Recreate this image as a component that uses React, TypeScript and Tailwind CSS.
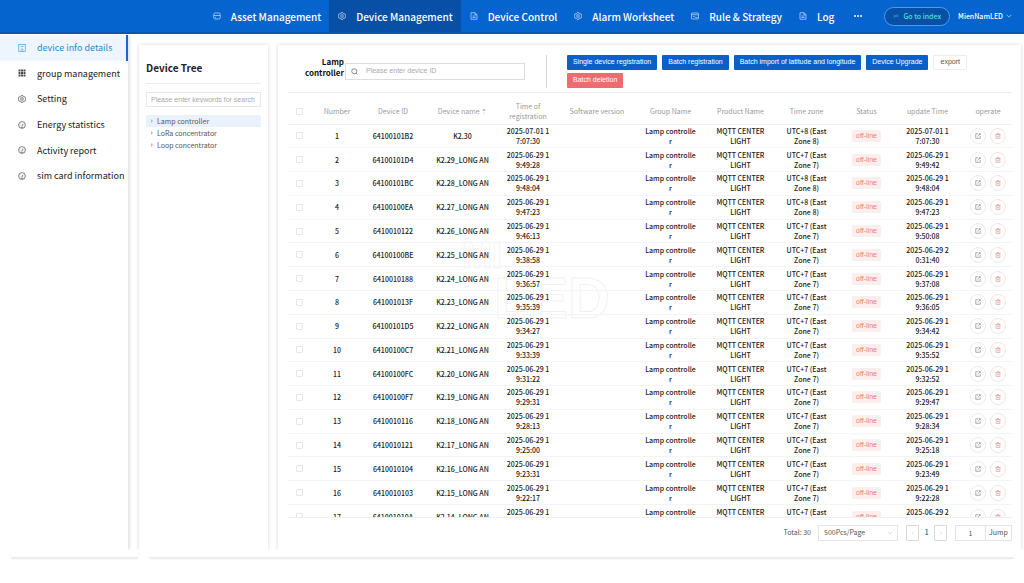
import { useState } from "react";
import type { ReactNode } from "react";

type IconProps = { className?: string };

type Device = {
	id: string;
	name: string;
	registered: string;
	zone: number;
	updated: string;
};

const DEVICES: Device[] = [
	{ id: "64100101B2", name: "K2.30", registered: "2025-07-01 1\n7:07:30", zone: 8, updated: "2025-07-01 1\n7:07:30" },
	{ id: "64100101D4", name: "K2.29_LONG AN", registered: "2025-06-29 1\n9:49:28", zone: 7, updated: "2025-06-29 1\n9:49:42" },
	{ id: "64100101BC", name: "K2.28_LONG AN", registered: "2025-06-29 1\n9:48:04", zone: 8, updated: "2025-06-29 1\n9:48:04" },
	{ id: "64100100EA", name: "K2.27_LONG AN", registered: "2025-06-29 1\n9:47:23", zone: 8, updated: "2025-06-29 1\n9:47:23" },
	{ id: "6410010122", name: "K2.26_LONG AN", registered: "2025-06-29 1\n9:46:13", zone: 7, updated: "2025-06-29 1\n9:50:08" },
	{ id: "64100100BE", name: "K2.25_LONG AN", registered: "2025-06-29 1\n9:38:58", zone: 7, updated: "2025-06-29 2\n0:31:40" },
	{ id: "6410010188", name: "K2.24_LONG AN", registered: "2025-06-29 1\n9:36:57", zone: 7, updated: "2025-06-29 1\n9:37:08" },
	{ id: "641001013F", name: "K2.23_LONG AN", registered: "2025-06-29 1\n9:35:39", zone: 7, updated: "2025-06-29 1\n9:36:05" },
	{ id: "64100101D5", name: "K2.22_LONG AN", registered: "2025-06-29 1\n9:34:27", zone: 7, updated: "2025-06-29 1\n9:34:42" },
	{ id: "64100100C7", name: "K2.21_LONG AN", registered: "2025-06-29 1\n9:33:39", zone: 7, updated: "2025-06-29 1\n9:35:52" },
	{ id: "64100100FC", name: "K2.20_LONG AN", registered: "2025-06-29 1\n9:31:22", zone: 7, updated: "2025-06-29 1\n9:32:52" },
	{ id: "64100100F7", name: "K2.19_LONG AN", registered: "2025-06-29 1\n9:29:31", zone: 7, updated: "2025-06-29 1\n9:29:47" },
	{ id: "6410010116", name: "K2.18_LONG AN", registered: "2025-06-29 1\n9:28:13", zone: 7, updated: "2025-06-29 1\n9:28:34" },
	{ id: "6410010121", name: "K2.17_LONG AN", registered: "2025-06-29 1\n9:25:00", zone: 7, updated: "2025-06-29 1\n9:25:18" },
	{ id: "6410010104", name: "K2.16_LONG AN", registered: "2025-06-29 1\n9:23:31", zone: 7, updated: "2025-06-29 1\n9:23:49" },
	{ id: "6410010103", name: "K2.15_LONG AN", registered: "2025-06-29 1\n9:22:17", zone: 7, updated: "2025-06-29 1\n9:22:28" },
	{ id: "641001010A", name: "K2.14_LONG AN", registered: "2025-06-29 1\n9:20:51", zone: 7, updated: "2025-06-29 2\n0:20:14" },
];

/* ── ICONS ── */
function Svg({ className, children }: IconProps & { children: ReactNode }) {
	return (
		<svg
			viewBox="0 0 16 16"
			fill="none"
			stroke="currentColor"
			strokeWidth="1.4"
			className={className}
			aria-hidden="true"
		>
			{children}
		</svg>
	);
}

const DatabaseIcon = ({ className }: IconProps) => (
	<Svg className={className}>
		<rect x="1.5" y="2" width="13" height="12" rx="3" />
		<path d="M1.5 7h13M4 11h2" />
	</Svg>
);

const GearIcon = ({ className }: IconProps) => (
	<Svg className={className}>
		<path d="M6.3 1.2h3.4l.6 2 1.6.9 2-.5 1.5 2.8-1.4 1.6 1.4 1.6-1.5 2.8-2-.5-1.6.9-.6 2H6.3l-.6-2-1.6-.9-2 .5L.6 9.6 2 8 .6 6.4l1.5-2.8 2 .5 1.6-.9z" />
		<circle cx="8" cy="8" r="2.6" />
	</Svg>
);

const FileIcon = ({ className }: IconProps) => (
	<Svg className={className}>
		<path d="M2 1.5h8l4 4v9H2zM10 1.5v4h4M5 8h6M5 11h6" />
	</Svg>
);

const PanelIcon = ({ className }: IconProps) => (
	<Svg className={className}>
		<rect x="1" y="2" width="14" height="12" rx="1" />
		<path d="M1 5.5h14M4 9h3l2 2h4" />
	</Svg>
);

const InfoIcon = ({ className }: IconProps) => (
	<Svg className={className}>
		<rect x="1.5" y="1" width="13" height="14" />
		<path d="M5 5h6M8 8v3M5 12h6" />
	</Svg>
);

const GridIcon = ({ className }: IconProps) => (
	<svg viewBox="0 0 16 16" fill="currentColor" className={className} aria-hidden="true">
		<path d="M1 1h4v4H1zM6 1h4v4H6zM11 1h4v4h-4zM1 6h4v4H1zM6 6h4v4H6zM11 6h4v4h-4zM1 11h4v4H1zM6 11h4v4H6zM11 11h4v4h-4z" />
	</svg>
);

const GaugeIcon = ({ className }: IconProps) => (
	<Svg className={className}>
		<circle cx="8" cy="8" r="6.8" />
		<path d="M7.5 10.5 10 5.5M3.5 8h1M11.5 8h1M5.5 12.5h5M5 4.7l.6.6" />
	</Svg>
);

const SearchIcon = ({ className }: IconProps) => (
	<Svg className={className}>
		<circle cx="7.5" cy="7.5" r="5.8" />
		<path d="m11.5 11.5 3 3" />
	</Svg>
);

const SwapIcon = ({ className }: IconProps) => (
	<Svg className={className}>
		<path d="M1 6.5h13l-4-4M15 9.5H2l4 4" />
	</Svg>
);

const Chevron = ({ className }: IconProps) => (
	<Svg className={className}>
		<path d="m2 5 6 6 6-6" />
	</Svg>
);

const EditIcon = ({ className }: IconProps) => (
	<Svg className={className}>
		<path d="M9 2H2v12h12V8M7 9.5 14 2M10.5 2H14v3.5" />
	</Svg>
);

const TrashIcon = ({ className }: IconProps) => (
	<Svg className={className}>
		<path d="M1 4h14M5.5 4V1.5h5V4M3 4v10.5h10V4M6.3 7v4.5M9.7 7v4.5" />
	</Svg>
);

const TOP_NAV = [
	{ label: "Asset Management", Icon: DatabaseIcon },
	{ label: "Device Management", Icon: GearIcon, active: true },
	{ label: "Device Control", Icon: FileIcon },
	{ label: "Alarm Worksheet", Icon: GearIcon },
	{ label: "Rule & Strategy", Icon: PanelIcon },
	{ label: "Log", Icon: FileIcon },
];

const SIDE_NAV = [
	{ label: "device info details", Icon: InfoIcon, active: true },
	{ label: "group management", Icon: GridIcon },
	{ label: "Setting", Icon: GearIcon },
	{ label: "Energy statistics", Icon: GaugeIcon },
	{ label: "Activity report", Icon: GaugeIcon },
	{ label: "sim card information", Icon: GaugeIcon },
];

const TREE = ["Lamp controller", "LoRa concentrator", "Loop concentrator"];

const ACTIONS = [
	"Single device registration",
	"Batch registration",
	"Batch import of latitude and longitude",
	"Device Upgrade",
];

const COLUMNS = [
	{ label: "Number", width: "w-[54px]" },
	{ label: "Device ID", width: "w-[58px]" },
	{ label: "Device name ⇡", width: "w-[81px]" },
	{ label: "Time of registration", width: "w-[50px]" },
	{ label: "Software version", width: "w-[88px]" },
	{ label: "Group Name", width: "w-[59px]" },
	{ label: "Product Name", width: "w-[81px]" },
	{ label: "Time zone", width: "w-[51px]" },
	{ label: "Status", width: "w-[69px]" },
	{ label: "update Time", width: "w-[53px]" },
	{ label: "operate", width: "w-[58px] pl-[10px]" },
];

function Tick({ label }: { label: string }) {
	return (
		<input
			type="checkbox"
			aria-label={label}
			className="mx-auto block h-[7px] w-[7px] appearance-none rounded-[1px] border border-[#e6e6e6] bg-white checked:bg-[#0960cb]"
		/>
	);
}

function TopBar() {
	return (
		<header className="flex h-[34px] shrink-0 items-stretch justify-end border-b-2 border-[#0b57b0] bg-[#0664cf] pr-3 text-white">
			<nav className="flex">
				{TOP_NAV.map(({ label, Icon, active }) => (
					<a
						key={label}
						href="#"
						className={`flex items-center gap-[10px] pr-2 pl-[9px] text-[10px] font-medium whitespace-nowrap ${
							active ? "bg-[#0850a5]" : ""
						}`}
					>
						<Icon className="h-2 w-2 opacity-80" />
						{label}
					</a>
				))}
			</nav>
			<button type="button" aria-label="More" className="flex items-center gap-px px-3">
				<span className="h-[2px] w-[2px] rounded-full bg-white" />
				<span className="h-[2px] w-[2px] rounded-full bg-white" />
				<span className="h-[2px] w-[2px] rounded-full bg-white" />
			</button>
			<button
				type="button"
				className="ml-[10px] flex h-[19px] items-center gap-1 self-center rounded-full border border-[#4b9bf0] bg-[#0850a5] px-2 text-[7px] font-medium text-[#3fe0d8]"
			>
				<SwapIcon className="h-[6px] w-[6px] opacity-60" />
				Go to index
			</button>
			<button type="button" className="ml-2 flex items-center gap-[3px] text-[7px] font-medium">
				MienNamLED
				<Chevron className="h-[6px] w-[6px]" />
			</button>
		</header>
	);
}

function Sidebar() {
	return (
		<aside className="w-[128px] shrink-0 bg-white pt-px shadow-[1px_0_4px_rgba(0,0,0,0.16)]">
			<nav className="grid h-[154px] grid-rows-6">
				{SIDE_NAV.map(({ label, Icon, active }) => (
					<a
						key={label}
						href="#"
						className={`flex items-center gap-[11px] pl-[18px] text-[9px] whitespace-nowrap ${
							active
								? "border-r-2 border-[#1768cc] bg-[#edf6ff] text-[#2d87c8]"
								: "text-[#222]"
						}`}
					>
						<Icon className="h-2 w-2 shrink-0 opacity-80" />
						{label}
					</a>
				))}
			</nav>
		</aside>
	);
}

function DeviceTree() {
	const [selected, setSelected] = useState(TREE[0]);

	return (
		<section className="w-[129px] shrink-0 bg-white px-[7px] pt-[15px] shadow-[0_0_4px_rgba(0,0,0,0.16)]">
			<h2 className="border-b border-[#ececec] pb-[7px] text-[10px] leading-4 font-bold text-[#222]">
				Device Tree
			</h2>
			<input
				type="text"
				aria-label="Search the device tree"
				placeholder="Please enter keywords for search"
				className="mt-2 block h-[15px] w-full border border-[#e8e8e8] px-1 font-['Liberation_Sans',sans-serif] text-[7px] placeholder:text-[#aaa]"
			/>
			<ul className="mt-2">
				{TREE.map((item) => (
					<li key={item}>
						<button
							type="button"
							onClick={() => setSelected(item)}
							className={`flex h-3 w-full items-center gap-1 pl-[5px] text-[7px] text-[#555] ${
								item === selected ? "bg-[#e9f1fd]" : ""
							}`}
						>
							<span className="h-0 w-0 border-y-2 border-l-2 border-y-transparent border-l-[#b4bac4]" />
							{item}
						</button>
					</li>
				))}
			</ul>
		</section>
	);
}

function Toolbar() {
	return (
		<div className="flex items-center border-b border-[#ececec] pb-1">
			<label
				htmlFor="device-id"
				className="w-[57px] shrink-0 pr-px pb-[10px] text-right text-[8px] leading-[11px] font-bold text-[#111]"
			>
				Lamp controller
			</label>
			<div className="flex h-[17px] w-[180px] shrink-0 items-center gap-2 border border-[#dcdcdc] px-[5px] text-[#444]">
				<SearchIcon className="h-[7px] w-[7px]" />
				<input
					id="device-id"
					type="text"
					placeholder="Please enter device ID"
					className="min-w-0 flex-1 font-['Liberation_Sans',sans-serif] text-[7px] outline-none placeholder:text-[#aaa]"
				/>
			</div>
			<div className="ml-[21px] flex flex-1 flex-wrap gap-x-[5px] gap-y-[3px] border-l border-[#d4d4d4] pl-5 font-['Liberation_Sans',sans-serif] text-[7px]">
				{ACTIONS.map((label) => (
					<button
						key={label}
						type="button"
						className="h-[15px] rounded-[1px] bg-[#0960cb] px-[6px] whitespace-nowrap text-white"
					>
						{label}
					</button>
				))}
				<button
					type="button"
					className="h-[15px] rounded-[1px] border border-[#ececec] px-[6px] text-[#555]"
				>
					export
				</button>
				{/* fills the rest of the first line so that deletion starts a new one */}
				<div className="flex w-full">
					<button type="button" className="h-[15px] rounded-[1px] bg-[#ef6b70] px-[6px] text-white">
						Batch deletion
					</button>
				</div>
			</div>
		</div>
	);
}

function DeviceTable() {
	return (
		<table className="h-[430px] w-full table-fixed border-collapse text-center text-[7px] leading-[10px] text-[#222]">
			<thead>
				<tr className="h-[25px] border-b border-[#f1f1f1] text-[#999]">
					<th className="w-[22px]">
						<Tick label="Select all devices" />
					</th>
					{COLUMNS.map((col) => (
						<th key={col.label} className={`font-normal ${col.width}`}>
							{col.label}
						</th>
					))}
				</tr>
			</thead>
			<tbody className="font-medium whitespace-pre-line">
				{DEVICES.map((d, i) => (
					<tr key={d.id} className="border-b border-[#f4f4f4]">
						<td>
							<Tick label={`Select ${d.name}`} />
						</td>
						<td>{i + 1}</td>
						<td>{d.id}</td>
						<td>{d.name}</td>
						<td>{d.registered}</td>
						<td />
						<td>{"Lamp controlle\nr"}</td>
						<td>{"MQTT CENTER\nLIGHT"}</td>
						<td>{`UTC+${d.zone} (East\nZone ${d.zone})`}</td>
						<td>
							<span className="inline-block rounded-[2px] border border-[#fdeeee] bg-[#fdeeee] px-[3px] font-['Liberation_Sans',sans-serif] font-normal text-[#ee7a7a]">
								off-line
							</span>
						</td>
						<td>{d.updated}</td>
						<td className="pl-[10px]">
							<div className="flex justify-center gap-1">
								<button
									type="button"
									aria-label="Edit"
									className="grid h-4 w-4 shrink-0 place-items-center rounded-full border border-[#ececec] text-[#666]"
								>
									<EditIcon className="h-[6px] w-[6px]" />
								</button>
								<button
									type="button"
									aria-label="Delete"
									className="grid h-4 w-4 shrink-0 place-items-center rounded-full border border-[#f5e4e4] text-[#d98080]"
								>
									<TrashIcon className="h-[6px] w-[6px]" />
								</button>
							</div>
						</td>
					</tr>
				))}
			</tbody>
		</table>
	);
}

function Pagination() {
	return (
		<div className="flex h-[33px] shrink-0 items-center justify-end border-t border-[#efefef] pb-[3px] text-[7px] text-[#555]">
			<span className="mr-[7px]">Total: 30</span>
			<div className="relative mr-2 flex items-center">
				<select
					aria-label="Rows per page"
					className="h-4 w-[80px] appearance-none border border-[#e4e4e4] pl-[5px]"
				>
					<option>500Pcs/Page</option>
				</select>
				<Chevron className="pointer-events-none absolute right-[5px] h-[6px] w-[6px] text-[#bbb]" />
			</div>
			<button
				type="button"
				aria-label="Previous page"
				className="grid h-4 w-[13px] place-items-center rounded-[1px] border border-[#d8d8d8] text-[#aaa]"
			>
				<Chevron className="h-1 w-1 rotate-90" />
			</button>
			<span className="w-[15px] text-center font-bold text-[#2d87c8]">1</span>
			<button
				type="button"
				aria-label="Next page"
				className="grid h-4 w-[13px] place-items-center rounded-[1px] border border-[#d8d8d8] text-[#aaa]"
			>
				<Chevron className="h-1 w-1 -rotate-90" />
			</button>
			<input
				type="text"
				aria-label="Page number"
				defaultValue="1"
				className="ml-2 h-4 w-[31px] border border-[#e4e4e4] text-center"
			/>
			<button type="button" className="h-4 w-[26px] border border-l-0 border-[#e4e4e4]">
				Jump
			</button>
		</div>
	);
}

export default function App() {
	return (
		<div className="flex h-screen min-h-[583px] flex-col bg-white font-['Noto_Sans_CJK_SC',sans-serif]">
			<TopBar />
			<div className="flex min-h-0 flex-1 overflow-hidden">
				<Sidebar />
				<div className="flex min-w-0 flex-1 gap-[10px] pt-[11px] pr-[3px] pl-[11px]">
					<DeviceTree />
					<main className="relative isolate flex min-w-0 flex-1 flex-col bg-white pt-[10px] pr-[9px] pl-[10px] shadow-[0_0_4px_rgba(0,0,0,0.16)]">
						<Toolbar />
						<div className="mt-[6px] min-h-0 flex-1 overflow-hidden">
							<DeviceTable />
						</div>
						<Pagination />
						{/* Watermark, kept behind the rows */}
						<div
							aria-hidden="true"
							className="pointer-events-none absolute top-[194px] left-[184px] -z-10 font-['Liberation_Sans',sans-serif] font-bold text-transparent select-none"
						>
							<div className="text-[36px] leading-[34px] [-webkit-text-stroke:1px_#f5f5f5]">MI</div>
							<div className="pl-8 text-[58px] leading-[50px] [-webkit-text-stroke:1px_#f1f1f1]">LED</div>
						</div>
					</main>
				</div>
			</div>
			<footer className="flex h-[33px] shrink-0 items-start gap-[11px] pr-[10px] pl-[11px]">
				<div className="h-[7px] w-[127px] shadow-[0_2px_2px_rgba(0,0,0,0.09)]" />
				<div className="h-[7px] flex-1 shadow-[0_2px_2px_rgba(0,0,0,0.09)]" />
			</footer>
		</div>
	);
}
